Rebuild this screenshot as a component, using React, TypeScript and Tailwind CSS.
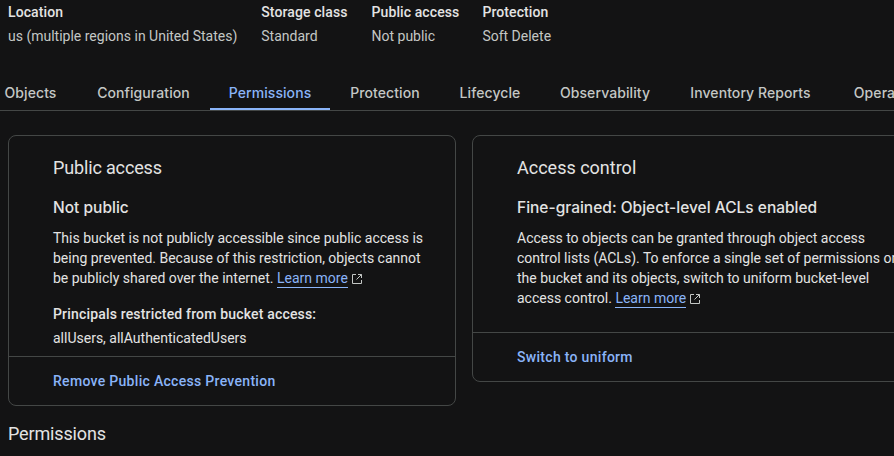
import React from "react";

const ExternalIcon = () => (
  <svg width="12" height="12" viewBox="0 0 12 12" fill="none" stroke="#c4c7c5" strokeWidth="1" className="ml-[3px] inline-block align-[-2px]">
    <path d="M5 1.5H1.5v9h9V7" />
    <path d="M7 1.5h3.5V5M10.5 1.5 5.5 6.5" />
  </svg>
);

const Learn = () => (
  <>
    <a className="border-b border-[#8ab4f8] pb-[1px] text-[#8ab4f8]">Learn more</a>
    <ExternalIcon />
  </>
);

const Detail = ({ label, value }: { label: string; value: string }) => (
  <div className="flex flex-col shrink-0">
    <div className="text-[14px] leading-[20px] font-medium text-[#e3e3e3] tracking-[0.1px]">{label}</div>
    <div className="text-[14px] leading-[20px] mt-[4px] text-[#c4c7c5]">{value}</div>
  </div>
);

const Tab = ({ label, width, active }: { label: string; width: string; active?: boolean }) => (
  <div className={"shrink-0 h-[35px] pt-[1px] flex items-center justify-center font-['Inter',sans-serif] text-[14px] tracking-[0.08px] font-medium border-b-[2px] " + width + " " + (active ? "text-[#8ab4f8] border-[#8ab4f8]" : "text-[#c4c7c5] border-transparent")}>
    {label}
  </div>
);

export default function App() {
  return (
    <div className="w-[894px] h-[456px] overflow-hidden bg-[#131314] font-['Roboto',sans-serif] text-[#e3e3e3]">
      <div className="flex gap-[24px] pl-[8px] pt-[2px]">
        <Detail label="Location" value="us (multiple regions in United States)" />
        <Detail label="Storage class" value="Standard" />
        <Detail label="Public access" value="Not public" />
        <div className="-ml-[1px]">
          <Detail label="Protection" value="Soft Delete" />
        </div>
      </div>
      <div className="mt-[29px] flex border-b border-[#444746] -ml-[16px] w-[910px] h-[36px]">
        <Tab label="Objects" width="w-[93px]" />
        <Tab label="Configuration" width="w-[133px]" />
        <Tab label="Permissions" width="w-[120px]" active />
        <Tab label="Protection" width="w-[110px]" />
        <Tab label="Lifecycle" width="w-[100px]" />
        <Tab label="Observability" width="w-[130px]" />
        <Tab label="Inventory Reports" width="w-[161px]" />
        <Tab label="Operations" width="w-[120px]" />
      </div>
      <div className="flex items-start gap-[16px] pl-[8px] pt-[24px] w-[960px]">
        <div className="w-[448px] h-[271px] shrink-0 border border-[#444746] rounded-[8px] flex flex-col">
          <div className="pl-[44px] pr-[24px] flex-1">
            <div className="text-[18px] leading-[24px] mt-[20px] tracking-[-0.15px]">Public access</div>
            <div className="font-['Inter',sans-serif] text-[15.5px] leading-[24px] font-medium mt-[16px]">Not public</div>
            <div className="text-[14px] leading-[20px] mt-[8px] w-[375px]">
              This bucket is not publicly accessible since public access is being prevented. Because of this restriction, objects cannot be publicly shared over the internet. <Learn />
            </div>
            <div className="text-[14px] leading-[20px] font-medium mt-[16px] tracking-[0.17px]">Principals restricted from bucket access:</div>
            <div className="text-[14px] leading-[20px] mt-[4px]">allUsers, allAuthenticatedUsers</div>
          </div>
          <div className="border-t border-[#444746] h-[49px] pl-[44px] flex items-center text-[14px] font-medium text-[#8ab4f8] tracking-[0.3px]">
            Remove Public Access Prevention
          </div>
        </div>
        <div className="w-[448px] h-[247px] shrink-0 border border-[#444746] rounded-[8px] flex flex-col">
          <div className="pl-[44px] pr-[24px] flex-1">
            <div className="text-[18px] leading-[24px] mt-[20px]">Access control</div>
            <div className="font-['Inter',sans-serif] text-[15.5px] leading-[24px] font-medium mt-[16px]">Fine-grained: Object-level ACLs enabled</div>
            <div className="text-[14px] leading-[20px] mt-[8px] w-[390px]">
              Access to objects can be granted through object access control lists (ACLs). To enforce a single set of permissions on the bucket and its objects, switch to uniform bucket-level access control. <Learn />
            </div>
          </div>
          <div className="border-t border-[#444746] h-[49px] pl-[44px] flex items-center text-[14px] font-medium text-[#8ab4f8] tracking-[0.3px]">
            Switch to uniform
          </div>
        </div>
      </div>
      <div className="text-[18px] leading-[24px] pl-[8px] mt-[16px] tracking-[-0.15px]">Permissions</div>
    </div>
  );
}
